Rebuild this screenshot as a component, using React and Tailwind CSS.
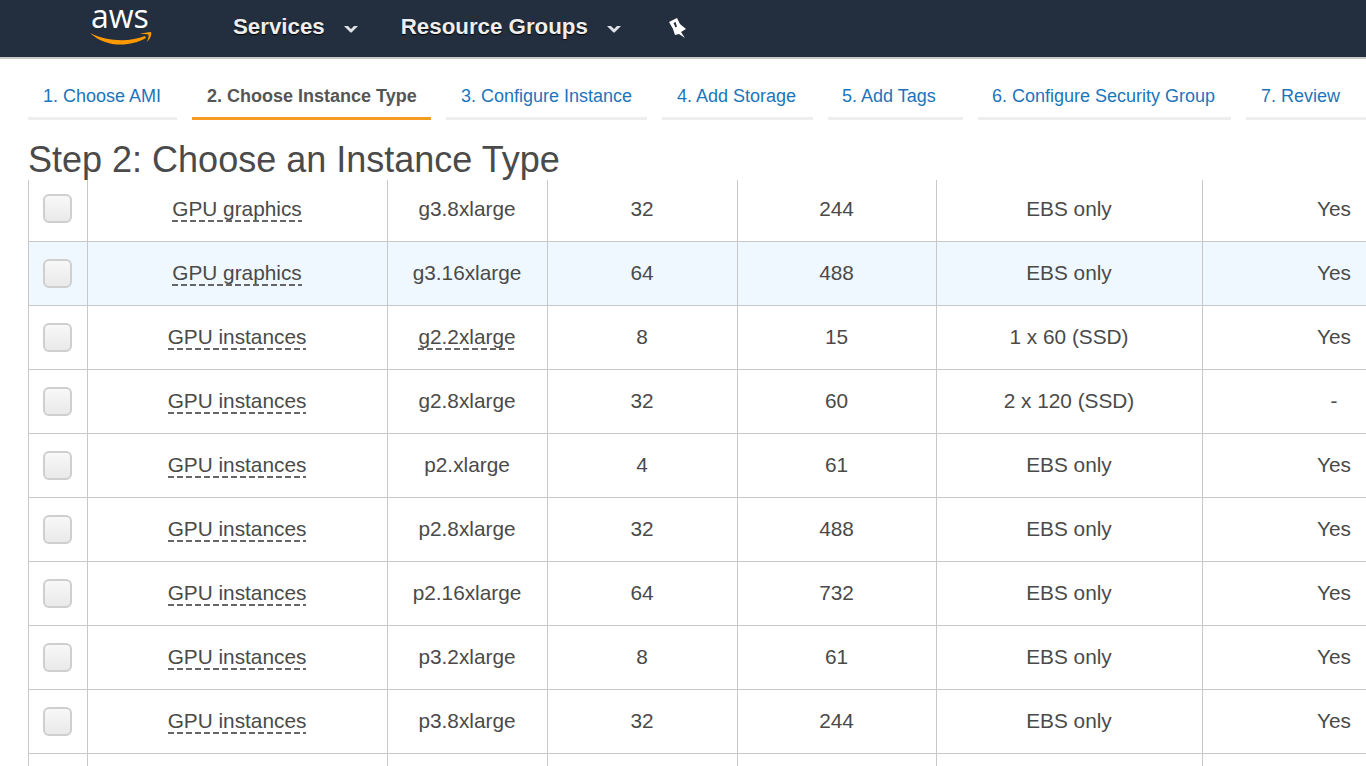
const tabs = [
  ["1. Choose AMI", "w-[149px] pl-[15px]", false],
  ["2. Choose Instance Type", "w-[239px] pl-[15px]", true],
  ["3. Configure Instance", "w-[201px] pl-[15px]", false],
  ["4. Add Storage", "w-[151px] pl-[15px]", false],
  ["5. Add Tags", "w-[135px] pl-[14px]", false],
  ["6. Configure Security Group", "w-[253px] pl-[14px]", false],
  ["7. Review", "w-[120px] pl-[15px]", false],
];

const rows = [
  ["GPU graphics", "g3.8xlarge", "32", "244", "EBS only", "Yes", false, "h-[62px]", false, "pb-[4px]"],
  ["GPU graphics", "g3.16xlarge", "64", "488", "EBS only", "Yes", true, "h-[64px]", false, "pb-[1px]"],
  ["GPU instances", "g2.2xlarge", "8", "15", "1 x 60 (SSD)", "Yes", false, "h-[64px]", true, "pb-[1px]"],
  ["GPU instances", "g2.8xlarge", "32", "60", "2 x 120 (SSD)", "-", false, "h-[64px]", false, "pb-[1px]"],
  ["GPU instances", "p2.xlarge", "4", "61", "EBS only", "Yes", false, "h-[64px]", false, "pb-[1px]"],
  ["GPU instances", "p2.8xlarge", "32", "488", "EBS only", "Yes", false, "h-[64px]", false, "pb-[1px]"],
  ["GPU instances", "p2.16xlarge", "64", "732", "EBS only", "Yes", false, "h-[64px]", false, "pb-[1px]"],
  ["GPU instances", "p3.2xlarge", "8", "61", "EBS only", "Yes", false, "h-[64px]", false, "pb-[1px]"],
  ["GPU instances", "p3.8xlarge", "32", "244", "EBS only", "Yes", false, "h-[64px]", false, "pb-[1px]"],
];

function Chevron() {
  return (
    <svg width="14" height="9" viewBox="0 0 14 9" className="mt-[5px]">
      <path d="M0 1 L4 1 L7 4 L10 1 L14 1 L7.5 7.5 L6.5 7.5 Z" fill="#dfe2e4" />
    </svg>
  );
}

function Dashed({ children }) {
  return (
    <span className="relative inline-block leading-[24px]">
      {children}
      <span className="absolute left-0 right-0 top-[23px] h-[2px] bg-[repeating-linear-gradient(90deg,#666_0_6px,transparent_6px_9px)]" />
    </span>
  );
}

function Checkbox() {
  return (
    <div className="w-[29px] h-[29px] rounded-[6px] border-2 border-[#cfcfcf] bg-gradient-to-b from-[#f8f8f8] to-[#e9e9e9]" />
  );
}

function Row({ r }) {
  const [family, type, cpu, mem, storage, ebs, hl, h, dashType, pb] = r;
  return (
    <div className={`flex items-stretch border-b border-[#c8c8c8] ${h} ${hl ? "bg-[#f0f8ff]" : ""}`}>
      <div className={`w-[60px] shrink-0 border-l border-r border-[#c8c8c8] flex items-center justify-center pr-[2px] ${pb}`}><Checkbox /></div>
      <div className={`w-[300px] shrink-0 border-r border-[#c8c8c8] flex items-center justify-center pr-[1px] ${pb}`}><Dashed>{family}</Dashed></div>
      <div className={`w-[160px] shrink-0 border-r border-[#c8c8c8] flex items-center justify-center pr-[1px] ${pb}`}>
        {dashType ? <Dashed>{type}</Dashed> : type}
      </div>
      <div className={`w-[190px] shrink-0 border-r border-[#c8c8c8] flex items-center justify-center pr-[1px] ${pb}`}>{cpu}</div>
      <div className={`w-[199px] shrink-0 border-r border-[#c8c8c8] flex items-center justify-center pr-[1px] ${pb}`}>{mem}</div>
      <div className={`w-[266px] shrink-0 border-r border-[#c8c8c8] flex items-center justify-center pr-[1px] ${pb}`}>{storage}</div>
      <div className={`flex-1 flex items-center justify-end pr-[14px] ${pb}`}><span className="w-[36px] text-center">{ebs}</span></div>
    </div>
  );
}

export default function App() {
  return (
    <div className="w-[1366px] h-[766px] overflow-hidden bg-white text-[#4a4a4a] font-['Liberation_Sans',Arial,sans-serif]">
      <header className="h-[59px] bg-[#232f3e] border-b-2 border-[#c9c9c9] flex items-start">
        <div className="w-[233px] h-full shrink-0 pl-[88px]">
          <svg width="66" height="47" viewBox="0 0 66 47" className="block">
            <text x="3" y="28" fontSize="32" fill="#fff" fontFamily="'Open Sans', sans-serif">aws</text>
            <path d="M2 33 C 18 48, 42 47, 58 38 L 57 36 C 42 42, 20 42, 2 33 Z" fill="#f90" />
            <path d="M52 34 C 55 33 60 32 63 32 C 64 35 62 39 59 42 C 60 39 61 36 60.5 34.5 C 58 34 55 34 52 34 Z" fill="#f90" />
          </svg>
        </div>
        <nav className="flex items-center h-[53px] text-[#eee] font-bold text-[22.3px] [text-shadow:0_1px_1px_#000]">
          <span>Services</span>
          <span className="ml-[19px] w-[14px] flex"><Chevron /></span>
          <span className="ml-[43px]">Resource Groups</span>
          <span className="ml-[19px] w-[15px] flex"><Chevron /></span>
          <svg className="ml-[47px] mt-[2px]" width="18" height="20" viewBox="0 0 18 20">
            <path fillRule="evenodd" d="M0 4 L8 0 L11 6 L17 11 L12 14 L16 20 L10 16 L6 17 L4 11 Z M4.5 5 L6.5 4 L8 8.5 L6.5 9.5 Z" fill="#fff" />
          </svg>
        </nav>
      </header>

      <nav className="flex gap-[15px] pl-[28px] mt-[24px] h-[37px]">
        {tabs.map(([label, w, active]) => (
          <div key={label} className={`${w} shrink-0 h-[37px] border-b-[3px] flex items-start pt-[1px] text-[18px] leading-[24px] ${active ? "border-[#f79a22] text-[#555] font-bold" : "border-[#eee] text-[#1b75bb]"}`}>
            {label}
          </div>
        ))}
      </nav>

      <h1 className="ml-[28px] mt-[20px] h-[40px] text-[36px] leading-[40px] font-normal relative z-10">Step 2: Choose an Instance Type</h1>

      <section className="ml-[28px] text-[20.8px]">
        {rows.map((r, i) => <Row key={i} r={r} />)}
        <div className="flex h-[20px]">
          <div className="w-[60px] border-l border-r border-[#c8c8c8]" />
          <div className="w-[300px] border-r border-[#c8c8c8]" />
          <div className="w-[160px] border-r border-[#c8c8c8]" />
          <div className="w-[190px] border-r border-[#c8c8c8]" />
          <div className="w-[199px] border-r border-[#c8c8c8]" />
          <div className="w-[266px] border-r border-[#c8c8c8]" />
        </div>
      </section>
    </div>
  );
}
